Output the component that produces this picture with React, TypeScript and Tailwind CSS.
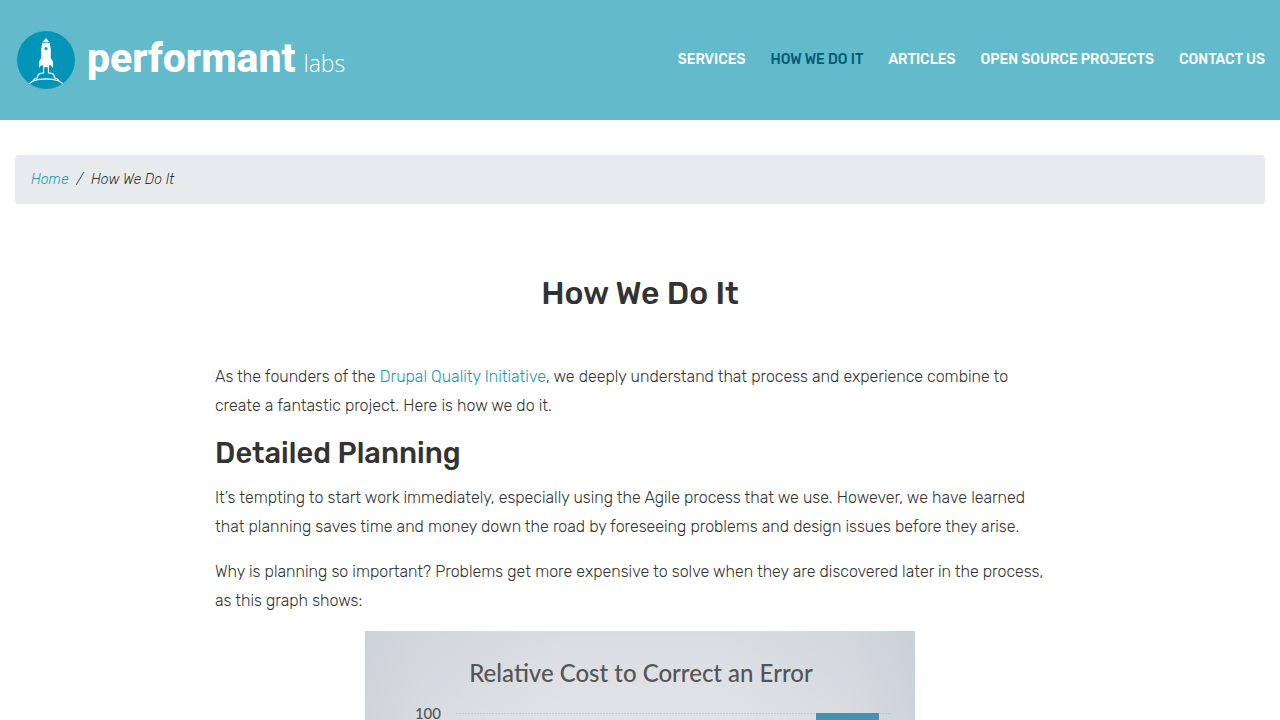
const navItems = [
  { label: "SERVICES" },
  { label: "HOW WE DO IT", active: true },
  { label: "ARTICLES" },
  { label: "OPEN SOURCE PROJECTS" },
  { label: "CONTACT US" },
];

function RocketMark() {
  return (
    <svg viewBox="0 0 58 58" className="size-[58px] shrink-0" aria-hidden="true">
      <circle cx="29" cy="29" r="29" fill="#0395b8" />
      <path d="M29 7L32.2 11H25.8Z" fill="#fff" />
      <path
        d="M25.3 11.7H32.7Q34.6 19 33.7 27L35.9 30.5V37L33.8 34.2H32.2L31.6 36.2H26.4L25.8 34.2H24.2L22.1 37V30.5L24.3 27Q23.4 19 25.3 11.7Z"
        fill="#fff"
      />
      <circle cx="29" cy="17.4" r="1.5" fill="#0395b8" />
      <g fill="none" stroke="#fff" strokeWidth="1.1">
        <path d="M26.6 36V41.8L22.8 42.6Q20.2 43.8 20.6 46.8Q17 47.4 16.4 49.8L12.2 52.6" />
        <path d="M31.4 36V41.8L35.2 42.6Q37.8 43.8 37.4 46.8Q41 47.4 41.6 49.8L45.8 52.6" />
        <path d="M16 49.8Q29 46 42 49.8" />
      </g>
    </svg>
  );
}

function CostChart() {
  return (
    <svg viewBox="0 0 550 89" role="img" aria-label="Relative Cost to Correct an Error" className="mx-auto block w-full max-w-[550px]">
      <defs>
        <linearGradient id="paper" x1="0" x2="1" y1="0" y2="0">
          <stop offset="0" stopColor="#d0d5db" />
          <stop offset="0.12" stopColor="#d9dce1" />
          <stop offset="0.35" stopColor="#e2e3e7" />
          <stop offset="0.65" stopColor="#e2e3e7" />
          <stop offset="0.88" stopColor="#d9dce1" />
          <stop offset="1" stopColor="#ccd3db" />
        </linearGradient>
        <linearGradient id="shade" x1="0" x2="0" y1="0" y2="1">
          <stop offset="0" stopColor="#c3ccd6" stopOpacity="0.3" />
          <stop offset="1" stopColor="#c3ccd6" stopOpacity="0" />
        </linearGradient>
      </defs>
      <rect width="550" height="89" fill="url(#paper)" />
      <rect width="550" height="89" fill="url(#shade)" />
      <text x="276" y="51" textAnchor="middle" fontSize="24" fill="#555" className="font-['Lato',sans-serif] font-medium">
        Relative Cost to Correct an Error
      </text>
      <text x="76" y="88" textAnchor="end" fontSize="15" fill="#555" className="font-['Lato',sans-serif] font-medium">
        100
      </text>
      <line x1="91" y1="82.5" x2="526" y2="82.5" stroke="#c4c6ca" strokeDasharray="2 1" />
      <rect x="451" y="82" width="63" height="7" fill="#4292b2" />
    </svg>
  );
}

export default function App() {
  return (
    <div className="bg-white font-['Rubik','Roboto',sans-serif] font-light text-[#333]">
      <header className="flex min-h-[120px] items-center justify-between bg-[#62bacb] pr-[15px] pl-[17px]">
        <a href="#home" aria-label="performant labs" className="flex items-center gap-3 text-white">
          <RocketMark />
          <span className="flex items-baseline gap-2 pb-1 leading-none">
            <span className="font-['Roboto',sans-serif] text-[41px] font-extrabold">performant</span>
            <span className="font-['Open_Sans',sans-serif] text-[23px] font-light">labs</span>
          </span>
        </a>
        <nav aria-label="Main" className="pb-0.5">
          <ul className="flex gap-[25px] text-[14px] font-medium">
            {navItems.map((item) => (
              <li key={item.label}>
                <a href="#page" className={item.active ? "text-[#005c73]" : "text-white"}>
                  {item.label}
                </a>
              </li>
            ))}
          </ul>
        </nav>
      </header>

      <main className="px-[15px] pt-[35px]">
        <nav aria-label="Breadcrumb" className="rounded bg-[#e7ebee] px-4 py-3 text-[14px] leading-[25px] italic">
          <ol className="flex gap-2">
            <li>
              <a href="#home" className="text-[#1b96b6]">Home</a>
            </li>
            <li aria-hidden="true">/</li>
            <li>How We Do It</li>
          </ol>
        </nav>

        <article className="mx-auto mt-[70px] max-w-[850px] text-[16px] leading-[29px]">
          <h1 className="mb-[50px] text-center text-[32px] leading-[38px] font-medium">How We Do It</h1>
          <p className="mb-4 pr-4">
            As the founders of the{" "}
            <a href="#dqi" className="text-[#1b96b6]">Drupal Quality Initiative</a>, we deeply understand that process and
            experience combine to create a fantastic project. Here is how we do it.
          </p>
          <h2 className="mb-3 text-[29px] leading-[35px] font-medium">Detailed Planning</h2>
          <p className="mb-4 pr-4">
            It’s tempting to start work immediately, especially using the Agile process that we use. However, we have
            learned that planning saves time and money down the road by foreseeing problems and design issues before they
            arise.
          </p>
          <p className="mb-4 pr-4">
            Why is planning so important? Problems get more expensive to solve when they are discovered later in the
            process, as this graph shows:
          </p>
          <CostChart />
        </article>
      </main>
    </div>
  );
}
